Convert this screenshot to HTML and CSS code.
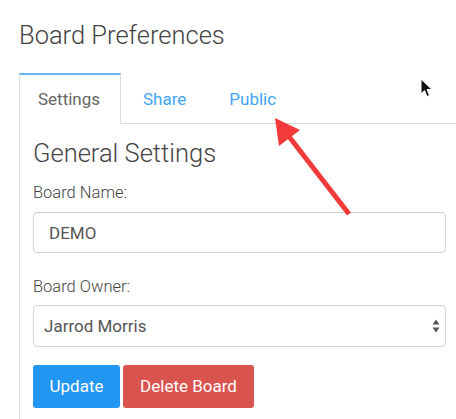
FILE: index.html
```html
<!DOCTYPE html>
<html>
<head>
<meta charset="utf-8">
<link rel="stylesheet" href="styles.css">
</head>
<body>
<div class="page">
  <h1 class="title">Board Preferences</h1>
  <div class="tabs">
    <div class="tab active">Settings</div>
    <div class="tab share">Share</div>
    <div class="tab">Public</div>
  </div>
  <div class="panel">
    <h2 class="section">General Settings</h2>
    <label class="label">Board Name:</label>
    <div class="input">DEMO</div>
    <label class="label owner">Board Owner:</label>
    <div class="select">
      <span>Jarrod Morris</span>
      <svg class="caret" width="8" height="14" viewBox="0 0 8 14"><path d="M4 0.5 L7.5 5.5 H0.5 Z M4 13.5 L7.5 8.5 H0.5 Z" fill="#555"/></svg>
    </div>
    <div class="buttons">
      <div class="btn blue">Update</div>
      <div class="btn red">Delete Board</div>
    </div>
  </div>
</div>
<svg class="arrow" width="456" height="419" viewBox="0 0 456 419">
  <line x1="349" y1="214" x2="287" y2="134" stroke="#f23a3a" stroke-width="5"/>
  <polygon points="275,118 300,130 279,146" fill="#f23a3a"/>
</svg>
<svg class="cursor" width="14" height="22" viewBox="0 0 14 22">
  <path d="M1 1 L1 16 L4.5 12.5 L7 18.5 L9.5 17.5 L7 11.5 L12 11.5 Z" fill="#111" stroke="#fff" stroke-width="1"/>
</svg>
</body>
</html>
```
FILE: styles.css
```css
html, body {
  margin: 0;
  padding: 0;
  background: #fff;
  font-family: Roboto, "Liberation Sans", sans-serif;
  width: 456px;
  height: 419px;
  overflow: hidden;
}
.page {
  padding-left: 19px;
  padding-top: 20px;
}
.title {
  margin: 0;
  font-size: 25.5px;
  font-weight: 300;
  color: #444;
  line-height: 30px;
}
.tabs {
  margin-top: 23px;
  display: flex;
  border-bottom: 1px solid #ddd;
  height: 50px;
}
.tab {
  font-size: 17px;
  color: #42a5f5;
  line-height: 52px;
  padding: 0 21px;
}
.tab.share {
  padding: 0 22px 0 22px;
}
.tab.active {
  color: #666;
  border: 1px solid #ddd;
  border-top: 2px solid #64b5f6;
  border-bottom: none;
  background: #fff;
  line-height: 49px;
  padding: 0 19px 0 18px;
  margin-bottom: -1px;
  box-sizing: border-box;
  width: 102px;
  height: 51px;
}
.panel {
  border-left: 1px solid #ddd;
  padding: 14px 10px 0 13px;
  height: 295px;
  box-sizing: border-box;
}
.section {
  margin: 0;
  font-size: 25.5px;
  font-weight: 300;
  color: #444;
  line-height: 30px;
}
.label {
  display: block;
  font-size: 16.5px;
  font-weight: 300;
  color: #444;
  margin-top: 15px;
  line-height: 20px;
}
.label.owner {
  margin-top: 24px;
}
.input, .select {
  margin-top: 9px;
  border: 1px solid #d6d6d6;
  border-radius: 4px;
  height: 41px;
  box-sizing: border-box;
  display: flex;
  align-items: center;
  font-size: 17px;
  color: #555;
  box-shadow: inset 0 1px 1px rgba(0,0,0,0.04);
}
.input {
  padding-left: 15px;
}
.select {
  height: 42px;
  margin-top: 8px;
  padding-left: 10px;
  padding-right: 5px;
  justify-content: space-between;
}
.buttons {
  display: flex;
  gap: 3px;
  margin-top: 18px;
}
.btn {
  height: 43px;
  line-height: 43px;
  border-radius: 3px;
  color: #fff;
  font-size: 17px;
  box-sizing: border-box;
  text-align: center;
}
.btn.blue {
  background: #2196f3;
  width: 87px;
}
.btn.red {
  background: #d9534f;
  width: 131px;
}
.arrow {
  position: absolute;
  left: 0;
  top: 0;
  pointer-events: none;
}
.cursor {
  position: absolute;
  left: 420px;
  top: 78px;
}
```
